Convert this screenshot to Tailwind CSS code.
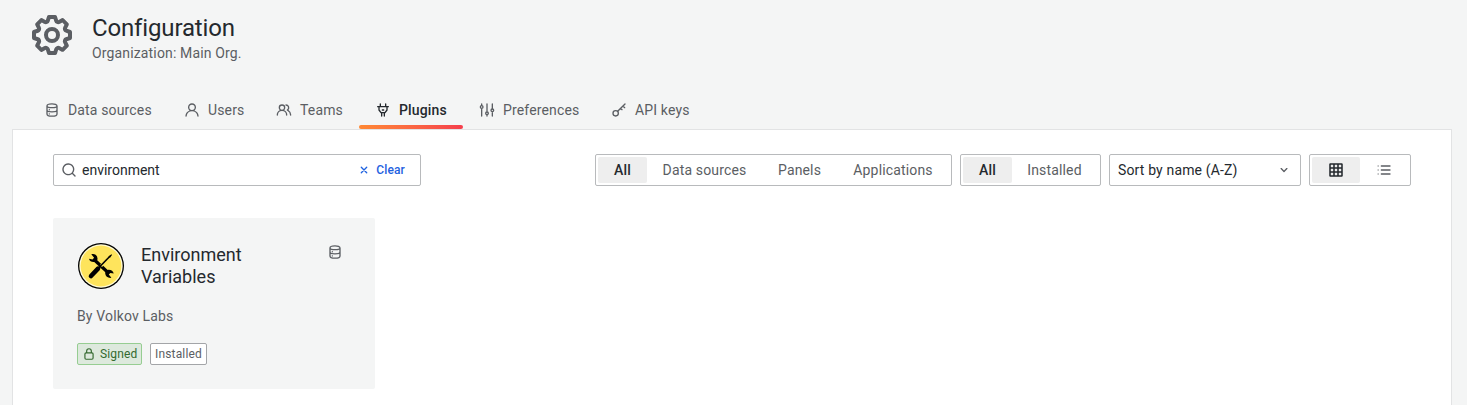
<!DOCTYPE html>
<html lang="en">
<head>
<meta charset="utf-8">
<title>Configuration: Plugins</title>
<script src="https://cdn.jsdelivr.net/npm/@tailwindcss/browser@4"></script>
</head>
<body class="h-[405px] overflow-hidden bg-[#f4f5f5] font-[Roboto,sans-serif] text-sm leading-[22px] tracking-[0.15px] text-[#24292e]">
<svg class="hidden">
  <symbol id="cog" viewBox="0 0 24 24"><path d="M21.32,9.55l-1.89-.63.89-1.78A1,1,0,0,0,20.13,6L18,3.87a1,1,0,0,0-1.15-.19l-1.78.89-.63-1.89A1,1,0,0,0,13.5,2h-3a1,1,0,0,0-.95.68L8.92,4.57,7.14,3.68A1,1,0,0,0,6,3.87L3.87,6a1,1,0,0,0-.19,1.15l.89,1.78-1.89.63A1,1,0,0,0,2,10.5v3a1,1,0,0,0,.68.95l1.89.63-.89,1.78A1,1,0,0,0,3.87,18L6,20.13a1,1,0,0,0,1.15.19l1.78-.89.63,1.89a1,1,0,0,0,.95.68h3a1,1,0,0,0,.95-.68l.63-1.89,1.78.89A1,1,0,0,0,18,20.13L20.13,18a1,1,0,0,0,.19-1.15l-.89-1.78,1.89-.63A1,1,0,0,0,22,13.5v-3A1,1,0,0,0,21.32,9.55ZM20,12.78l-1.2.4A2,2,0,0,0,17.64,16l.57,1.14-1.1,1.1L16,17.64a2,2,0,0,0-2.79,1.16l-.4,1.2H11.22l-.4-1.2A2,2,0,0,0,8,17.64l-1.14.57-1.1-1.1L6.36,16A2,2,0,0,0,5.2,13.18L4,12.78V11.22l1.2-.4A2,2,0,0,0,6.36,8L5.79,6.89l1.1-1.1L8,6.36A2,2,0,0,0,10.82,5.2l.4-1.2h1.56l.4,1.2A2,2,0,0,0,16,6.36l1.14-.57,1.1,1.1L17.64,8a2,2,0,0,0,1.16,2.79l1.2.4ZM12,8a4,4,0,1,0,4,4A4,4,0,0,0,12,8Zm0,6a2,2,0,1,1,2-2A2,2,0,0,1,12,14Z"/></symbol>
  <symbol id="database" viewBox="0 0 24 24"><g fill="none" stroke="currentColor" stroke-width="2" stroke-linecap="round"><path d="M4.500 6v12c0 1.900 3.400 3.300 7.500 3.300s7.500-1.400 7.500-3.300V6c0-1.800-3.400-3.200-7.500-3.200S4.500 4.200 4.500 6s3.400 2.500 7.500 2.500 7.500-.7 7.500-2.500M4.500 12c0 1.800 3.400 2.800 7.500 2.800s7.500-1 7.500-2.800"/><path d="M8 11.500v.1M8 17.800v.1"/></g></symbol>
  <symbol id="user" viewBox="0 0 24 24"><path d="M15.710,12.710a6,6,0,1,0-7.420,0,10,10,0,0,0-6.220,8.180,1,1,0,0,0,2,.22,8,8,0,0,1,15.900,0,1,1,0,0,0,1,.89h.11a1,1,0,0,0,.88-1.100A10,10,0,0,0,15.710,12.710ZM12,12a4,4,0,1,1,4-4A4,4,0,0,1,12,12Z"/></symbol>
  <symbol id="users" viewBox="0 0 24 24"><path d="M12.300,12.220A4.920,4.920,0,0,0,14,8.500a5,5,0,0,0-10,0,4.920,4.920,0,0,0,1.700,3.720A8,8,0,0,0,1,19.500a1,1,0,0,0,2,0,6,6,0,0,1,12,0,1,1,0,0,0,2,0A8,8,0,0,0,12.300,12.220ZM9,11.500a3,3,0,1,1,3-3A3,3,0,0,1,9,11.500Zm9.740.32A5,5,0,0,0,15,3.500a1,1,0,0,0,0,2,3,3,0,0,1,3,3,3,3,0,0,1-1.500,2.590,1,1,0,0,0-.5.84,1,1,0,0,0,.45.86l.39.26.13.07a7,7,0,0,1,4,6.380,1,1,0,0,0,2,0A9,9,0,0,0,18.740,11.820Z"/></symbol>
  <symbol id="plug" viewBox="0 0 24 24"><g fill="none" stroke="currentColor" stroke-width="2" stroke-linecap="round" stroke-linejoin="round"><path d="M8 6V3M16 6V3M4 7h16M6 7v5l3 4h6l3-4V7M10 16v5M14 16v5M11 12h2"/></g></symbol>
  <symbol id="sliders" viewBox="0 0 24 24"><g fill="none" stroke="currentColor" stroke-width="2" stroke-linecap="round"><path d="M4 11v10M4 3v2M12 3v11M12 20v1M20 3v7M20 16v5"/><circle cx="4" cy="7.500" r="2"/><circle cx="12" cy="17" r="2"/><circle cx="20" cy="12.500" r="2"/></g></symbol>
  <symbol id="key" viewBox="0 0 24 24"><g fill="none" stroke="currentColor" stroke-width="2" stroke-linecap="round" stroke-linejoin="round"><circle cx="7" cy="17" r="4"/><path d="M10 14L21 3M18 6l2.500 2.500M14.500 9.500l2 2"/></g></symbol>
  <symbol id="search" viewBox="0 0 24 24"><path d="M21.710,20.290,18,16.610A9,9,0,1,0,16.610,18l3.680,3.680a1,1,0,0,0,1.420,0A1,1,0,0,0,21.710,20.290ZM11,18a7,7,0,1,1,7-7A7,7,0,0,1,11,18Z"/></symbol>
  <symbol id="times" viewBox="0 0 24 24"><path d="M5.500 5.500l13 13M18.500 5.500l-13 13" stroke="currentColor" stroke-width="3.200" stroke-linecap="round"/></symbol>
  <symbol id="angle" viewBox="0 0 24 24"><path d="M17,9.170a1,1,0,0,0-1.410,0L12,12.710,8.460,9.170a1,1,0,0,0-1.410,0,1,1,0,0,0,0,1.420l4.240,4.240a1,1,0,0,0,1.420,0L17,10.590A1,1,0,0,0,17,9.170Z"/></symbol>
  <symbol id="grid" viewBox="0 0 24 24"><g fill="none" stroke="currentColor" stroke-width="2.300"><rect x="3" y="3" width="18" height="18" rx=".5"/><path d="M9 3v18M15 3v18M3 9h18M3 15h18"/></g></symbol>
  <symbol id="list" viewBox="0 0 24 24"><path d="M8 6h13M8 12h13M8 18h13" stroke="currentColor" stroke-width="2" stroke-linecap="round"/><path d="M3 6h.5M3 12h.5M3 18h.5" stroke="currentColor" stroke-width="1.500" stroke-linecap="round"/></symbol>
  <symbol id="lock" viewBox="0 0 24 24"><path d="M17,9V7A5,5,0,0,0,7,7V9a3,3,0,0,0-3,3v7a3,3,0,0,0,3,3H17a3,3,0,0,0,3-3V12A3,3,0,0,0,17,9ZM9,7a3,3,0,0,1,6,0V9H9Zm9,12a1,1,0,0,1-1,1H7a1,1,0,0,1-1-1V12a1,1,0,0,1,1-1H17a1,1,0,0,1,1,1Z"/></symbol>
</svg>

<header class="flex h-[91px] items-start pl-7 pt-[11px]">
  <svg class="size-12 fill-[#5b5e63]"><use href="#cog"/></svg>
  <div class="pl-4 pt-0.5">
    <h1 class="text-2xl leading-[30px] tracking-[-0.15px]">Configuration</h1>
    <div class="leading-[20px] text-[#5b5e63]">Organization: Main Org.</div>
  </div>
</header>

<nav class="flex h-[38px] pl-7 text-[#5b5e63]">
  <a class="flex h-[38px] w-[140px] items-center gap-2 pl-4"><svg class="size-4 fill-current"><use href="#database"/></svg>Data sources</a>
  <a class="flex h-[38px] w-[92px] items-center gap-2 pl-4"><svg class="size-4 fill-current"><use href="#user"/></svg>Users</a>
  <a class="flex h-[38px] w-[99px] items-center gap-2 pl-4"><svg class="size-4 fill-current"><use href="#users"/></svg>Teams</a>
  <a class="relative flex h-[38px] w-[104px] items-center gap-2 pl-4 font-medium text-[#24292e]"><svg class="size-4 fill-current"><use href="#plug"/></svg>Plugins<span class="absolute bottom-0 left-0 h-1 w-full rounded-xs bg-linear-to-r from-[#ff8833] to-[#f53e4c]"></span></a>
  <a class="flex h-[38px] w-[132px] items-center gap-2 pl-4"><svg class="size-4 fill-current"><use href="#sliders"/></svg>Preferences</a>
  <a class="flex h-[38px] items-center gap-2 pl-4"><svg class="size-4 fill-current"><use href="#key"/></svg>API keys</a>
</nav>

<main class="ml-3 mr-[15px] h-[276px] border border-b-0 border-[#e2e3e4] bg-white px-10 pt-6">
  <div class="flex h-8 items-stretch gap-2">
    <div class="mr-auto flex w-[368px] items-center rounded-xs border border-[#b8babc] pl-[7px] pr-[15px]">
      <svg class="size-4 fill-[#5b5e63]"><use href="#search"/></svg>
      <span class="pl-[5px] tracking-normal">environment</span>
      <span class="ml-auto flex items-center gap-[7px] text-xs font-medium text-[#1f62e0]"><svg class="size-2.5"><use href="#times"/></svg>Clear</span>
    </div>
    <div class="flex w-[357px] rounded-xs border border-[#b8babc] p-0.5 text-[#5b5e63]">
      <span class="flex w-[49px] items-center justify-center rounded-xs bg-[#eeeeee] font-medium text-[#24292e]">All</span>
      <span class="flex w-[115px] items-center justify-center">Data sources</span>
      <span class="flex w-[75px] items-center justify-center">Panels</span>
      <span class="flex w-[112px] items-center justify-center">Applications</span>
    </div>
    <div class="flex w-[141px] rounded-xs border border-[#b8babc] p-0.5 text-[#5b5e63]">
      <span class="flex w-[49px] items-center justify-center rounded-xs bg-[#eeeeee] font-medium text-[#24292e]">All</span>
      <span class="flex w-[85px] items-center justify-center">Installed</span>
    </div>
    <div class="flex w-[192px] items-center justify-between rounded-xs border border-[#b8babc] px-2">
      Sort by name (A-Z)<svg class="size-4 fill-[#5b5e63]"><use href="#angle"/></svg>
    </div>
    <div class="flex w-[102px] rounded-xs border border-[#b8babc] p-0.5">
      <span class="flex w-12 items-center justify-center rounded-xs bg-[#eeeeee]"><svg class="size-4"><use href="#grid"/></svg></span>
      <span class="flex w-12 items-center justify-center text-[#5b5e63]"><svg class="size-4"><use href="#list"/></svg></span>
    </div>
  </div>

  <section class="mt-8 h-[171px] w-[322px] rounded-xs bg-[#f4f5f5] p-6">
    <div class="flex h-[54px]">
      <svg class="size-12 shrink-0" viewBox="0 0 48 48">
        <circle cx="24" cy="24" r="23" fill="#000"/>
        <circle cx="24" cy="24" r="21.700" fill="#fffbd6"/>
        <circle cx="24" cy="24" r="20.400" fill="#fee45c"/>
        <path d="M17 17.500L31.500 31" stroke="#000" stroke-width="3.200"/>
        <path d="M14.300 12.300c3.300-1 6 .8 6.200 4.200.1 2.200-1.200 3.500-3.200 3.500-2.500.3-4.800-1-5.300-3.300l3.500.8 1.600-1.700z"/>
        <path d="M34.400 35.800c-3 .6-6-1.200-6.200-4.300-.1-2.200 1.400-3.700 3.400-3.700 2.500-.1 4.700 1.400 5.100 3.700l-3.300-.6-1.600 1.700z"/>
        <path d="M24 24L34.700 13" stroke="#fee45c" stroke-width="2.800"/>
        <path d="M14 34l7-7.300" stroke="#000" stroke-width="4.600" stroke-linecap="round"/>
        <path d="M20 27.500L32.700 14.500" stroke="#000" stroke-width="1.600"/>
        <path d="M31.500 14.200l3-1.900.5.600-2 2.900z"/>
      </svg>
      <h2 class="w-[202px] shrink-0 pl-4 pt-0.5 text-lg leading-[22px] tracking-normal">Environment<br>Variables</h2>
      <svg class="mt-0.5 size-4 shrink-0 fill-[#5b5e63] text-[#5b5e63]"><use href="#database"/></svg>
    </div>
    <div class="mt-[9px] text-[#5b5e63]">By Volkov Labs</div>
    <div class="mt-4 flex gap-2 text-xs leading-[18px]">
      <span class="flex h-[22px] w-[65px] items-center rounded-xs border border-[#96cd92] bg-[#dde9dd] pl-1 text-[#34692f]"><svg class="mr-1 size-3.5 shrink-0 fill-current"><use href="#lock"/></svg>Signed</span>
      <span class="flex h-[22px] w-[57px] items-center justify-center rounded-xs border border-[#a3a5a8] bg-white text-[#5b5e63]">Installed</span>
    </div>
  </section>
</main>
</body>
</html>
